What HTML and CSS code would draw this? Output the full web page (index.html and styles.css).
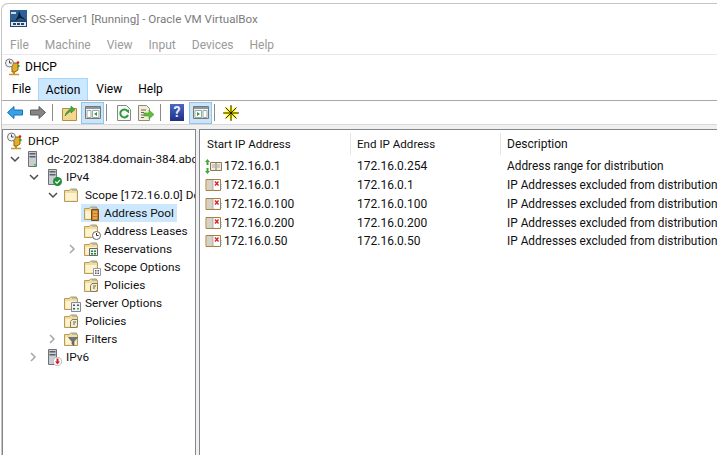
FILE: index.html
```html
<!DOCTYPE html>
<html lang="en">
<head>
<meta charset="utf-8">
<title>OS-Server1 [Running] - Oracle VM VirtualBox</title>
<link rel="stylesheet" href="styles.css">
</head>
<body>
<svg class="defs" width="0" height="0" aria-hidden="true">
  <defs>
    <symbol id="folder" viewBox="0 0 16 16">
      <path d="M1.500 14.500V3.500h5l1-1.500h6v1.500h1v11z" fill="#f2dc9c" stroke="#b99a5c"/>
      <path d="M2.500 13.500V6h11v7.500z" fill="#fdf3cf"/>
      <path d="M9 2.500h4v1H9z" fill="#6aa6d8"/>
    </symbol>
    <symbol id="dhcp" viewBox="0 0 18 18">
      <path d="M7 5h7v7l-3 2H8V10z" fill="#e5ad25" stroke="#8a6410"/>
      <circle cx="5.500" cy="5" r="4" fill="#f4f4f4" stroke="#777"/>
      <path d="M5.500 2.500V5h2.200" fill="none" stroke="#444"/>
      <circle cx="14" cy="4.500" r="1.300" fill="#d22"/>
      <circle cx="14.500" cy="8" r="1.200" fill="#2a2"/>
      <path d="M10 13v3" stroke="#b9862a" stroke-width="2"/>
      <path d="M5 16.500h10" stroke="#c8952f" stroke-width="1.500"/>
    </symbol>
    <symbol id="server" viewBox="0 0 14 18">
      <path d="M2.500 1.500h8v15h-8z" fill="#c9cdd2" stroke="#6e7378"/>
      <path d="M3.500 3h6v1.500h-6zM3.500 6h6v1.500h-6z" fill="#59606a"/>
      <path d="M8 14h2v1.500H8z" fill="#3c3"/>
    </symbol>
    <symbol id="book" viewBox="0 0 16 14">
      <path d="M.5 1.500h14.500v11H.5z" fill="#f6ecd8" stroke="#a8813e"/>
      <path d="M1.500 3h5M1.500 5h5M1.500 7h5M1.500 9h5M1.500 11h5" stroke="#b7b7b7"/>
      <path d="M7.500 1.500v11" stroke="#8a8a8a"/>
      <path d="M8 2h6.500v9.500H8z" fill="#fff"/>
      <path d="M9.500 3.500l3.500 4M13 3.500l-3.500 4" stroke="#e0202a" stroke-width="1.400"/>
      <path d="M15.500 6v6" stroke="#4a9ac8" stroke-dasharray="1 1"/>
    </symbol>
    <symbol id="range" viewBox="0 0 17 15">
      <path d="M2.500 0L5 3H3.500v3h-2V3H0z" fill="#3fa535"/>
      <path d="M2.500 15L0 12h1.500V9h2v3H5z" fill="#3fa535"/>
      <path d="M5.500 3.500h11v8h-11z" fill="#f3ecd9" stroke="#8a7a50"/>
      <path d="M11 3.500v8" stroke="#777"/>
      <path d="M7 6h3M7 8h3M12 6h3M12 8h3" stroke="#aaa"/>
    </symbol>
    <symbol id="chev-down" viewBox="0 0 10 10">
      <path d="M1 3l4 4 4-4" fill="none" stroke="#4d4d4d" stroke-width="1.500"/>
    </symbol>
    <symbol id="chev-right" viewBox="0 0 10 10">
      <path d="M2 1l4 4-4 4" fill="none" stroke="#a6a6a6" stroke-width="1.500"/>
    </symbol>
  </defs>
</svg>

<div class="frame">
  <header class="vm-title">
    <svg class="vm-logo" width="17" height="17" viewBox="0 0 17 17" aria-hidden="true">
      <path d="M0 0h17v17H0z" fill="#24466f"/>
      <path d="M0 0h17v10H0z" fill="#2c5f93"/>
      <path d="M1 2h5v2H1z" fill="#cfd8e3"/>
      <path d="M9 1l2 5 5 4-6-2-5 3 3-5z" fill="#0d1d33"/>
      <path d="M1 12h15v4H1z" fill="#dfe7ef"/>
      <path d="M3 13h3v2H3zM7 13h3v2H7zM11 13h3v2h-3z" fill="#24466f"/>
    </svg>
    <span>OS-Server1 [Running] - Oracle VM VirtualBox</span>
  </header>
  <nav class="vm-menu">
    <span>File</span><span>Machine</span><span>View</span><span>Input</span><span>Devices</span><span>Help</span>
  </nav>
  <div class="app-title">
    <svg class="app-icon" width="18" height="18"><use href="#dhcp"/></svg>
    <span>DHCP</span>
  </div>
  <nav class="app-menu">
    <span class="app-item">File</span>
    <span class="app-item is-open">Action</span>
    <span class="app-item">View</span>
    <span class="app-item">Help</span>
  </nav>
  <div class="toolbar">
    <span class="tool t-back">
      <svg width="16" height="13" viewBox="0 0 16 13"><path d="M.5 6.500L7 .5v3.500h8.500v5H7v3.500z" fill="#36a3e8" stroke="#1c6fb5"/></svg>
    </span>
    <span class="tool t-fwd">
      <svg width="16" height="13" viewBox="0 0 16 13"><path d="M15.500 6.500L9 .5v3.500H.5v5H9v3.500z" fill="#858585" stroke="#5c5c5c"/></svg>
    </span>
    <i class="sep sep-a"></i>
    <span class="tool t-up">
      <svg width="15" height="17" viewBox="0 0 15 17"><path d="M.5 4.500h14v12H.5z" fill="#f3d78e" stroke="#b08d45"/><path d="M3 12c1-4 3-6 6-7V2l4 3.500L9 9V7c-2 1-4 3-6 5z" fill="#4cab3c" stroke="#2f7f25" stroke-width=".6"/></svg>
    </span>
    <span class="tool t-on">
      <svg width="16" height="13" viewBox="0 0 16 13"><path d="M.5.5h15v12H.5z" fill="#f4f4f4" stroke="#777"/><path d="M1 1h14v2H1z" fill="#8b96a3"/><path d="M2 4.500h4v7H2zM7.500 4.500h6.500v7H7.500z" fill="#fff" stroke="#9aa"/><path d="M12 6v4L9 8z" fill="#2a9a3a"/></svg>
    </span>
    <i class="sep sep-b"></i>
    <span class="tool t-refresh">
      <svg width="14" height="16" viewBox="0 0 14 16"><path d="M.5.5h9l4 4v11H.5z" fill="#f8f8f8" stroke="#888"/><path d="M10.500 6A4 4 0 1 0 11 10" fill="none" stroke="#2f9a3a" stroke-width="2"/><path d="M8.500 5.500l3.500-1v4z" fill="#2f9a3a"/></svg>
    </span>
    <span class="tool t-export">
      <svg width="16" height="16" viewBox="0 0 16 16"><path d="M.5.5h8l3 3v12H.5z" fill="#f5efd9" stroke="#8f8a75"/><path d="M3 5h5M3 7.500h3M3 10h3M3 12.500h3" stroke="#666"/><path d="M6 8h5V5l5 4.500-5 4.500v-3H6z" fill="#62bd3f" stroke="#3f9a2c" stroke-width=".6"/></svg>
    </span>
    <i class="sep sep-c"></i>
    <span class="tool t-help">?</span>
    <span class="tool t-on t-on2">
      <svg width="16" height="13" viewBox="0 0 16 13"><path d="M.5.5h15v12H.5z" fill="#f4f4f4" stroke="#777"/><path d="M1 1h14v2H1z" fill="#8b96a3"/><path d="M2 4.500h6.500v7H2zM10 4.500h4v7h-4z" fill="#fff" stroke="#9aa"/><path d="M4 6v4l3-2z" fill="#2a9a3a"/></svg>
    </span>
    <i class="sep sep-b"></i>
    <span class="tool t-star">
      <svg width="16" height="16" viewBox="0 0 16 16"><path d="M8 1v14M1 8h14M3 3l10 10M13 3L3 13" stroke="#fff200" stroke-width="2.400"/><path d="M8 0v16M0 8h16M2.500 2.500l11 11M13.500 2.500l-11 11" stroke="#1a1a00" stroke-width=".9"/></svg>
    </span>
  </div>

  <main class="panes">
    <section class="tree">
      <div class="node root"><svg class="ico" width="18" height="18"><use href="#dhcp"/></svg><span>DHCP</span></div>
      <div class="node d0"><svg class="twist" width="10" height="10"><use href="#chev-down"/></svg><svg class="ico" width="16" height="18"><use href="#server"/></svg><span>dc-2021384.domain-384.abc</span></div>
      <div class="node d1"><svg class="twist" width="10" height="10"><use href="#chev-down"/></svg>
        <span class="ico ico-badged"><svg width="16" height="18"><use href="#server"/></svg><svg class="badge" width="9" height="9" viewBox="0 0 9 9"><circle cx="4.500" cy="4.500" r="4.500" fill="#1f8f3a"/><path d="M2.300 4.500l1.700 1.700 3-3.200" fill="none" stroke="#fff" stroke-width="1.200"/></svg></span><span>IPv4</span></div>
      <div class="node d2"><svg class="twist" width="10" height="10"><use href="#chev-down"/></svg><svg class="ico" width="16" height="16"><use href="#folder"/></svg><span>Scope [172.16.0.0] Dc</span></div>
      <div class="node d3"><i class="twist"></i>
        <span class="sel"><span class="ico ico-badged"><svg width="16" height="16"><use href="#folder"/></svg><svg class="badge badge-pool" width="8" height="12" viewBox="0 0 8 12"><path d="M.5.500h7v11h-7z" fill="#c77b1e" stroke="#7a4a10"/><path d="M2 3h4M2 6h4M2 9h4" stroke="#f4d9a0"/></svg></span><span>Address Pool</span></span></div>
      <div class="node d3"><i class="twist"></i>
        <span class="ico ico-badged"><svg width="16" height="16"><use href="#folder"/></svg><svg class="badge" width="9" height="9" viewBox="0 0 9 9"><circle cx="4.500" cy="4.500" r="4" fill="#fff" stroke="#666"/><path d="M4.500 2v2.500h2" fill="none" stroke="#333"/></svg></span><span>Address Leases</span></div>
      <div class="node d3"><svg class="twist" width="10" height="10"><use href="#chev-right"/></svg>
        <span class="ico ico-badged"><svg width="16" height="16"><use href="#folder"/></svg><svg class="badge badge-mid" width="9" height="8" viewBox="0 0 9 8"><path d="M.5.500h8v7h-8z" fill="#e9f2e4" stroke="#667"/><path d="M2 2.500h2v1.500H2zM5 2.500h2v1.500H5zM2 5h2v1.500H2zM5 5h2v1.500H5z" fill="#2d7a45"/></svg></span><span>Reservations</span></div>
      <div class="node d3"><i class="twist"></i>
        <span class="ico ico-badged"><svg width="16" height="16"><use href="#folder"/></svg><svg class="badge" width="8" height="8" viewBox="0 0 8 8"><path d="M.5.500h7v7h-7z" fill="#fff" stroke="#999"/><path d="M2 2h1.500v1.500H2zM4.500 2H6v1.500H4.500zM2 4.500h1.500V6H2zM4.500 4.500H6V6H4.500z" fill="#556"/></svg></span><span>Scope Options</span></div>
      <div class="node d3"><i class="twist"></i>
        <span class="ico ico-badged"><svg width="16" height="16"><use href="#folder"/></svg><svg class="badge badge-mid" width="8" height="9" viewBox="0 0 8 9"><path d="M2 .5h5.500v6L6 8.500H.5v-6z" fill="#f4eccf" stroke="#8a7a55"/><path d="M3 3h3M3 5h2" stroke="#665"/></svg></span><span>Policies</span></div>
      <div class="node d2"><i class="twist"></i>
        <span class="ico ico-badged"><svg width="16" height="16"><use href="#folder"/></svg><svg class="badge" width="10" height="10" viewBox="0 0 10 10"><path d="M.5.500h9v9h-9z" fill="#f2f2f2" stroke="#889"/><path d="M2 2.500h2V4H2zM6 2.500h2V4H6zM2 6h2v1.500H2z" fill="#4a5560"/><path d="M6 6h2v1.500H6z" fill="#36b34a"/></svg></span><span>Server Options</span></div>
      <div class="node d2"><i class="twist"></i>
        <span class="ico ico-badged"><svg width="16" height="16"><use href="#folder"/></svg><svg class="badge badge-mid" width="8" height="9" viewBox="0 0 8 9"><path d="M2 .5h5.500v6L6 8.500H.5v-6z" fill="#f4eccf" stroke="#8a7a55"/><path d="M3 3h3M3 5h2" stroke="#665"/></svg></span><span>Policies</span></div>
      <div class="node d2"><svg class="twist" width="10" height="10"><use href="#chev-right"/></svg>
        <span class="ico ico-badged"><svg width="16" height="16"><use href="#folder"/></svg><svg class="badge badge-mid" width="10" height="9" viewBox="0 0 10 9"><path d="M.5.500h9L6 4.500v4L4 7V4.500z" fill="#6d7680" stroke="#444b52" stroke-width=".6"/></svg></span><span>Filters</span></div>
      <div class="node d1"><svg class="twist" width="10" height="10"><use href="#chev-right"/></svg>
        <span class="ico ico-badged"><svg width="16" height="18"><use href="#server"/></svg><svg class="badge" width="9" height="9" viewBox="0 0 9 9"><circle cx="4.500" cy="4.500" r="4.200" fill="#fff" stroke="#bbb"/><path d="M3.500 1.500h2v3H7L4.500 7.500 2 4.500h1.500z" fill="#d01c24"/></svg></span><span>IPv6</span></div>
    </section>
    <section class="list">
      <div class="row head">
        <div class="cell c1">Start IP Address</div>
        <div class="cell c2">End IP Address</div>
        <div class="cell c3">Description</div>
      </div>
      <div class="row">
        <div class="cell c1"><svg class="row-ico" width="17" height="15"><use href="#range"/></svg>172.16.0.1</div>
        <div class="cell c2">172.16.0.254</div>
        <div class="cell c3">Address range for distribution</div>
      </div>
      <div class="row">
        <div class="cell c1"><svg class="row-ico" width="17" height="14"><use href="#book"/></svg>172.16.0.1</div>
        <div class="cell c2">172.16.0.1</div>
        <div class="cell c3">IP Addresses excluded from distribution</div>
      </div>
      <div class="row">
        <div class="cell c1"><svg class="row-ico" width="17" height="14"><use href="#book"/></svg>172.16.0.100</div>
        <div class="cell c2">172.16.0.100</div>
        <div class="cell c3">IP Addresses excluded from distribution</div>
      </div>
      <div class="row">
        <div class="cell c1"><svg class="row-ico" width="17" height="14"><use href="#book"/></svg>172.16.0.200</div>
        <div class="cell c2">172.16.0.200</div>
        <div class="cell c3">IP Addresses excluded from distribution</div>
      </div>
      <div class="row">
        <div class="cell c1"><svg class="row-ico" width="17" height="14"><use href="#book"/></svg>172.16.0.50</div>
        <div class="cell c2">172.16.0.50</div>
        <div class="cell c3">IP Addresses excluded from distribution</div>
      </div>
    </section>
  </main>
</div>
</body>
</html>
```

FILE: styles.css
```css
html, body {
  margin: 0;
  height: 100%;
  overflow: hidden;
  background: #fff;
}
body {
  font-family: "Roboto", "Noto Sans", sans-serif;
  font-size: 12px;
  color: #111;
  padding-top: 3px;
  box-sizing: border-box;
}
.defs { position: absolute; }
.frame {
  height: 452px;
  margin-left: 1px;
  border-top: 1px solid #c4c4c4;
  border-left: 1px solid #c4c4c4;
  border-top-left-radius: 7px;
  display: flex;
  flex-direction: column;
  overflow: hidden;
}
.vm-title {
  height: 29px;
  display: flex;
  align-items: center;
  gap: 4px;
  padding-left: 8px;
  color: #7b7b7b;
  font-size: 11.6px;
}
.vm-menu {
  height: 18px;
  padding-top: 3px;
  padding-left: 8px;
  display: flex;
  align-items: center;
  gap: 16px;
  color: #9a9a9a;
  border-bottom: 1px solid #e8e8e8;
}
.app-title {
  height: 23px;
  display: flex;
  align-items: center;
  gap: 3px;
  padding-left: 2px;
  color: #000;
}
.app-menu {
  height: 22px;
  display: flex;
  padding-left: 2px;
  border-bottom: 1px solid #a8a8a8;
}
.app-item {
  display: flex;
  align-items: center;
  padding: 0 7px;
  border: 1px solid transparent;
  color: #000;
}
.app-item:first-child { padding-right: 6px; }
.is-open {
  background: #cce8ff;
  border-color: #a5d6fb;
  border-bottom: 0;
}
.toolbar {
  height: 23px;
  display: flex;
  align-items: center;
  border-bottom: 1px solid #d9d9d9;
}
.tool {
  display: flex;
  align-items: center;
  justify-content: center;
}
.sep {
  width: 1px;
  height: 17px;
  background: #8a8a8a;
  margin-right: 1px;
}
.sep-a { margin-left: 6px; }
.sep-b { margin-left: 2px; }
.sep-c { margin-left: 6px; }
.t-back { width: 16px; margin-left: 5px; }
.t-fwd { width: 16px; margin-left: 7px; }
.t-up { width: 15px; margin-left: 8px; }
.t-on {
  width: 21px;
  height: 20px;
  margin-left: 4px;
  background: #cde4f7;
  border: 1px solid #8fc6ee;
}
.t-refresh { width: 14px; margin-left: 9px; }
.t-export { width: 16px; margin-left: 7px; }
.t-help {
  width: 14px;
  height: 17px;
  margin-left: 8px;
  background: linear-gradient(#4a68c0, #1f2f85);
  color: #e8ecff;
  font-weight: 700;
  font-size: 14px;
  line-height: 17px;
}
.t-on2 { margin-left: 5px; }
.t-star { width: 16px; margin-left: 7px; }
.panes {
  flex: 1;
  display: flex;
  gap: 3px;
  min-height: 0;
  padding-top: 4px;
  background: #f0f0f0;
}
.tree {
  flex: none;
  width: 192px;
  border: 1px solid #82878c;
  border-bottom: 0;
  background: #fff;
  padding-top: 2px;
  overflow: hidden;
  font-size: 11.8px;
}
.node {
  height: 18px;
  display: flex;
  align-items: center;
  white-space: nowrap;
}
.root { padding-left: 3px; }
.d0 { padding-left: 7px; }
.d1 { padding-left: 26px; }
.d2 { padding-left: 45px; }
.d3 { padding-left: 65px; }
.twist {
  flex: none;
  display: block;
  width: 10px;
  height: 10px;
  margin-right: 5px;
}
.ico {
  flex: none;
  display: block;
  margin-right: 6px;
}
.root .ico { margin-right: 4px; }
.d3 .ico { margin-right: 5px; }
.ico-badged {
  position: relative;
  width: 16px;
  height: 18px;
  display: flex;
  align-items: center;
}
.d1 .ico-badged > svg:first-child { margin-left: 2px; }
.badge {
  position: absolute;
  right: -2px;
  bottom: 0;
}
.badge-pool { right: 0; bottom: 1px; }
.badge-mid { right: 1px; bottom: 2px; }
.sel {
  display: flex;
  align-items: center;
  height: 18px;
  background: #cce8ff;
  padding: 0 3px 0 2px;
  margin-left: -2px;
}
.list {
  flex: 1;
  min-width: 0;
  border-left: 1px solid #82878c;
  border-top: 1px solid #82878c;
  background: #fff;
  overflow: hidden;
  padding-top: 3px;
}
.row {
  display: flex;
  height: 18.75px;
  align-items: center;
  white-space: nowrap;
}
.head {
  height: 22px;
  margin-bottom: 2px;
  font-size: 11.6px;
}
.cell {
  flex: none;
  height: 100%;
  display: flex;
  align-items: center;
  box-sizing: border-box;
}
.c1 { width: 150px; padding-left: 5px; }
.c2 { width: 150px; padding-left: 7px; }
.c3 { width: 217px; padding-left: 7px; font-size: 11.85px; }
.head .c1 { padding-left: 7px; }
.head .c2, .head .c3 { border-left: 1px solid #e5e5e5; padding-left: 6px; }
.head .c3 { font-size: 12px; }
.row-ico { flex: none; margin-right: 2px; }
```
